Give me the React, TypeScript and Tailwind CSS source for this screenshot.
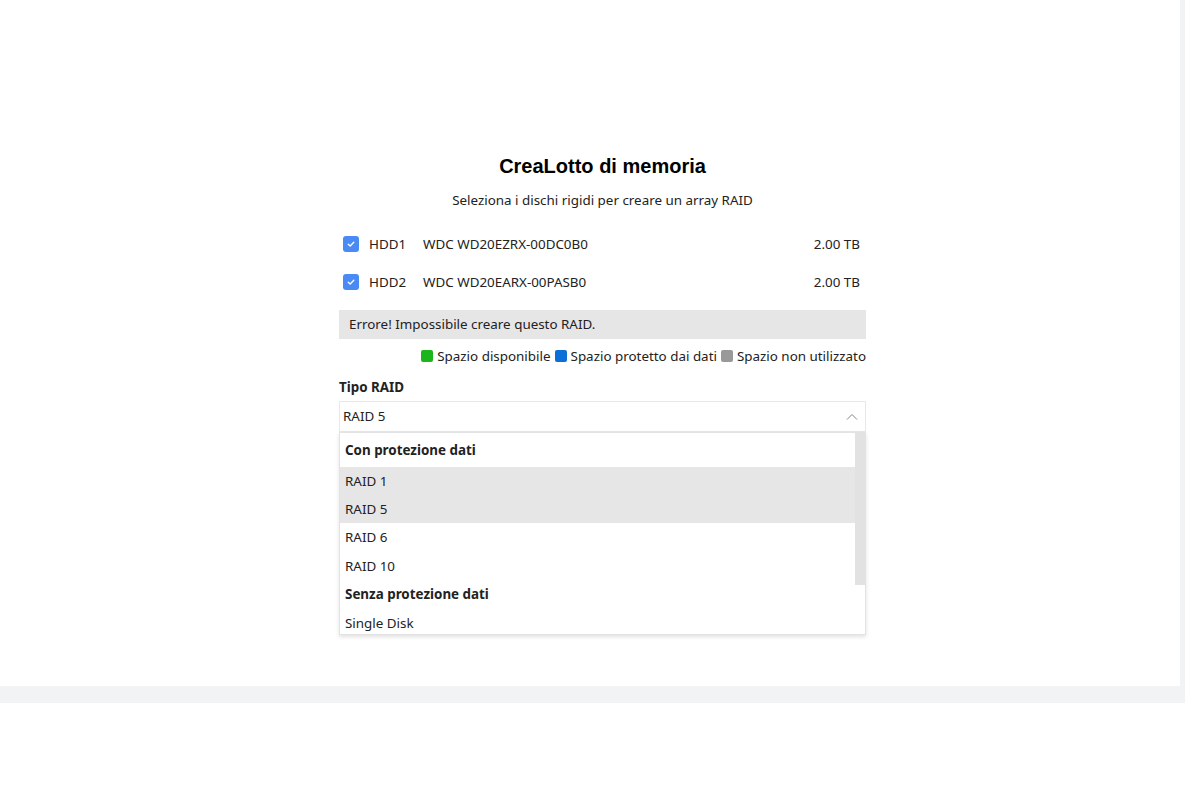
import React from "react";

const font = { fontFamily: '"Noto Sans", "Open Sans", sans-serif' };

function Check() {
  return (
    <div className="w-4 h-4 rounded-[3px] bg-[#4a8af4] flex items-center justify-center">
      <svg width="10" height="10" viewBox="0 0 10 10" fill="none">
        <path d="M2.2 5.2 L4.2 7 L7.8 3.2" stroke="white" strokeWidth="1.3" strokeLinecap="round" strokeLinejoin="round" />
      </svg>
    </div>
  );
}

export default function App() {
  const disks = [
    { id: "HDD1", model: "WDC WD20EZRX-00DC0B0", size: "2.00 TB" },
    { id: "HDD2", model: "WDC WD20EARX-00PASB0", size: "2.00 TB" },
  ];
  return (
    <div className="w-[1200px] h-[800px] bg-white" style={font}>
      <div className="w-[1185px] h-[703px] bg-[#f2f3f5]">
        <div className="w-[1180px] h-[686px] bg-white pt-[153px]">
          <div className="ml-[339px] w-[527px] text-[13.4px] text-[#222]">
            <h1 className="text-center text-[20px] font-bold text-black leading-[26px]" style={{ fontFamily: '"Liberation Sans", Arial, sans-serif' }}>
              CreaLotto di memoria
            </h1>
            <p className="text-center mt-[11px] leading-[20px]">Seleziona i dischi rigidi per creare un array RAID</p>
            <div className="mt-[15px]">
              {disks.map((d) => (
                <div key={d.id} className="flex items-center h-[38px] pl-[4px] pr-[6px]">
                  <Check />
                  <span className="ml-[10px] w-[54px]">{d.id}</span>
                  <span className="flex-1">{d.model}</span>
                  <span>{d.size}</span>
                </div>
              ))}
            </div>
            <div className="mt-[9px] h-[29px] bg-[#e6e6e6] flex items-center pl-[10px]">Errore! Impossibile creare questo RAID.</div>
            <div className="flex justify-end items-center h-[34px] gap-[4px]">
              <span className="w-3 h-3 rounded-[2px] bg-[#1cb51c]" />
              <span>Spazio disponibile</span>
              <span className="w-3 h-3 rounded-[2px] bg-[#0a6fd6]" />
              <span>Spazio protetto dai dati</span>
              <span className="w-3 h-3 rounded-[2px] bg-[#999]" />
              <span>Spazio non utilizzato</span>
            </div>
            <div className="font-bold h-[28px] flex items-center">Tipo RAID</div>
            <div className="relative">
              <div className="h-[31px] border border-[#e8e8e8] flex items-center justify-between pl-[3px] pr-[7px]">
                <span>RAID 5</span>
                <svg width="12" height="8" viewBox="0 0 12 8" fill="none">
                  <path d="M1 6.5 L6 1.5 L11 6.5" stroke="#888" strokeWidth="1" />
                </svg>
              </div>
              <div className="absolute left-0 right-0 top-[31px] h-[203px] bg-white border border-[#e3e3e3] shadow-[0_2px_4px_rgba(0,0,0,0.12)] flex">
                <div className="flex-1">
                  <div className="h-[34px] flex items-center pl-[5px] font-bold">Con protezione dati</div>
                  <div className="h-[28px] flex items-center pl-[5px] bg-[#e6e6e6]">RAID 1</div>
                  <div className="h-[28px] flex items-center pl-[5px] bg-[#e6e6e6]">RAID 5</div>
                  <div className="h-[29px] flex items-center pl-[5px]">RAID 6</div>
                  <div className="h-[28px] flex items-center pl-[5px]">RAID 10</div>
                  <div className="h-[29px] flex items-center pl-[5px] font-bold">Senza protezione dati</div>
                  <div className="h-[28px] flex items-center pl-[5px]">Single Disk</div>
                </div>
                <div className="w-[10px]">
                  <div className="h-[152px] bg-[#e2e2e2]" />
                </div>
              </div>
            </div>
          </div>
        </div>
      </div>
    </div>
  );
}
